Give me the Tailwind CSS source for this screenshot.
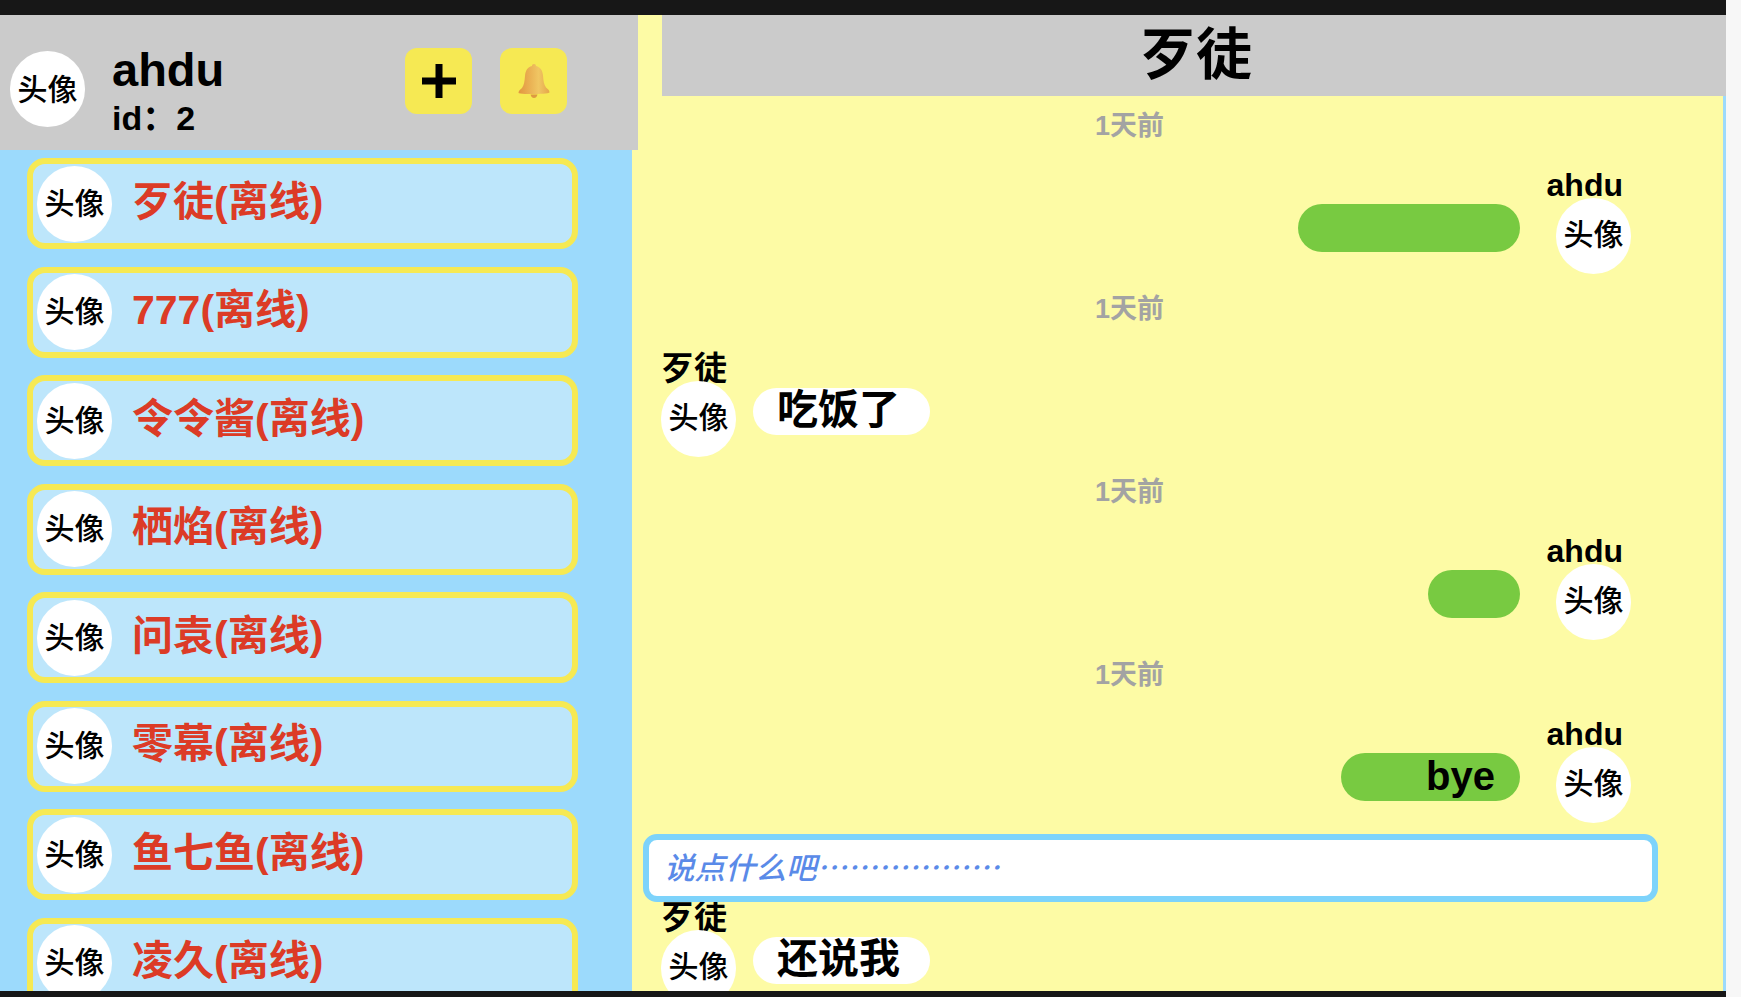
<!DOCTYPE html>
<html lang="zh-CN">
<head>
  <meta charset="UTF-8">
  <title>聊天</title>
  <script src="https://cdn.jsdelivr.net/npm/@tailwindcss/browser@4"></script>
</head>
<body class="bg-[#f7f7f7] h-[997px] overflow-hidden font-['Liberation_Sans','Noto_Sans_CJK_SC',sans-serif]">

  <div class="w-[1726px] h-[997px] flex flex-col bg-[#171717]">
    <div class="h-[15px] shrink-0"></div>

    <div class="h-[976px] flex bg-[#fdfba5] overflow-hidden relative">

      <!-- left column -->
      <div class="w-[638px] shrink-0 flex flex-col">
        <div class="h-[135px] shrink-0 bg-[#cbcbcb] flex items-center relative pl-[10px]">
          <div class="w-[75px] h-[76px] rounded-full bg-white flex items-center justify-center text-[30px] font-medium text-black mt-[13px]">头像</div>
          <div class="ml-[27px] mt-[14px] text-black">
            <div class="text-[47px] leading-[56px] font-bold">ahdu</div>
            <div class="text-[34px] leading-[40px] font-bold">id：2</div>
          </div>
          <div class="ml-auto flex gap-[28px] mr-[71px] mb-[3px]">
            <div class="w-[67px] h-[66px] rounded-[12px] bg-[#f6e953] flex items-center justify-center">
              <svg width="36" height="36" viewBox="0 0 36 36"><path d="M14.5 1h7v13.5H35v7H21.500V35h-7V21.500H1v-7h13.500z" fill="#000"/></svg>
            </div>
            <div class="w-[67px] h-[66px] rounded-[12px] bg-[#f6e953] flex items-center justify-center">
              <svg width="34" height="36" viewBox="0 0 34 36">
                <defs>
                  <linearGradient id="bell" x1="0" y1="0" x2="1" y2="0">
                    <stop offset="0" stop-color="#e2963f"/>
                    <stop offset="0.65" stop-color="#f0c663"/>
                    <stop offset="1" stop-color="#e5a64a"/>
                  </linearGradient>
                </defs>
                <path d="M17 1c1.300 0 2 .8 2 2 4.500 1 6.500 4.500 7 9.500.4 5 .8 9 3 12 2 1.500 3.500 3 3.500 5 0 1-12 1.500-15.500 1.500S1.500 31 1.500 30c0-2 1.500-3.500 3.500-5 2.200-3 2.600-7 3-12C8.500 7.500 10.500 4 15 3c0-1.200.7-2 2-2z" fill="url(#bell)"/>
                <path d="M13.500 31.500h7c-.5 2.500-2 3.500-3.500 3.500s-3-1-3.500-3.500z" fill="#de9a42"/>
              </svg>
            </div>
          </div>
        </div>

        <div class="w-[632px] flex-1 bg-[#9cdafc] pt-[8px] pl-[27px] flex flex-col gap-[17.5px] overflow-hidden">
          <div class="w-[551px] h-[91px] shrink-0 rounded-[18px] border-[6px] border-[#f6e953] bg-[#bde6fb] flex items-center pl-[4px]">
            <div class="w-[75px] h-[76px] pb-[1px] shrink-0 rounded-full bg-white flex items-center justify-center text-[30px] font-medium text-black">头像</div>
            <div class="ml-[20px] -mt-[2px] text-[41px] font-bold text-[#dc3b26]">歹徒(离线)</div>
          </div>
          <div class="w-[551px] h-[91px] shrink-0 rounded-[18px] border-[6px] border-[#f6e953] bg-[#bde6fb] flex items-center pl-[4px]">
            <div class="w-[75px] h-[76px] pb-[1px] shrink-0 rounded-full bg-white flex items-center justify-center text-[30px] font-medium text-black">头像</div>
            <div class="ml-[20px] -mt-[2px] text-[41px] font-bold text-[#dc3b26]">777(离线)</div>
          </div>
          <div class="w-[551px] h-[91px] shrink-0 rounded-[18px] border-[6px] border-[#f6e953] bg-[#bde6fb] flex items-center pl-[4px]">
            <div class="w-[75px] h-[76px] pb-[1px] shrink-0 rounded-full bg-white flex items-center justify-center text-[30px] font-medium text-black">头像</div>
            <div class="ml-[20px] -mt-[2px] text-[41px] font-bold text-[#dc3b26]">令令酱(离线)</div>
          </div>
          <div class="w-[551px] h-[91px] shrink-0 rounded-[18px] border-[6px] border-[#f6e953] bg-[#bde6fb] flex items-center pl-[4px]">
            <div class="w-[75px] h-[76px] pb-[1px] shrink-0 rounded-full bg-white flex items-center justify-center text-[30px] font-medium text-black">头像</div>
            <div class="ml-[20px] -mt-[2px] text-[41px] font-bold text-[#dc3b26]">栖焰(离线)</div>
          </div>
          <div class="w-[551px] h-[91px] shrink-0 rounded-[18px] border-[6px] border-[#f6e953] bg-[#bde6fb] flex items-center pl-[4px]">
            <div class="w-[75px] h-[76px] pb-[1px] shrink-0 rounded-full bg-white flex items-center justify-center text-[30px] font-medium text-black">头像</div>
            <div class="ml-[20px] -mt-[2px] text-[41px] font-bold text-[#dc3b26]">问袁(离线)</div>
          </div>
          <div class="w-[551px] h-[91px] shrink-0 rounded-[18px] border-[6px] border-[#f6e953] bg-[#bde6fb] flex items-center pl-[4px]">
            <div class="w-[75px] h-[76px] pb-[1px] shrink-0 rounded-full bg-white flex items-center justify-center text-[30px] font-medium text-black">头像</div>
            <div class="ml-[20px] -mt-[2px] text-[41px] font-bold text-[#dc3b26]">零幕(离线)</div>
          </div>
          <div class="w-[551px] h-[91px] shrink-0 rounded-[18px] border-[6px] border-[#f6e953] bg-[#bde6fb] flex items-center pl-[4px]">
            <div class="w-[75px] h-[76px] pb-[1px] shrink-0 rounded-full bg-white flex items-center justify-center text-[30px] font-medium text-black">头像</div>
            <div class="ml-[20px] -mt-[2px] text-[41px] font-bold text-[#dc3b26]">鱼七鱼(离线)</div>
          </div>
          <div class="w-[551px] h-[91px] shrink-0 rounded-[18px] border-[6px] border-[#f6e953] bg-[#bde6fb] flex items-center pl-[4px]">
            <div class="w-[75px] h-[76px] pb-[1px] shrink-0 rounded-full bg-white flex items-center justify-center text-[30px] font-medium text-black">头像</div>
            <div class="ml-[20px] -mt-[2px] text-[41px] font-bold text-[#dc3b26]">凌久(离线)</div>
          </div>
        </div>
      </div>

      <!-- chat -->
      <div class="flex-1 flex flex-col ml-[24px] relative">
        <div class="h-[81px] shrink-0 bg-[#cbcbcb] flex items-center justify-center text-[56px] font-bold text-black pb-[2px] pl-[4px]">歹徒</div>
      </div>

      <!-- messages -->
      <div class="absolute left-[632px] top-[81px] right-0 bottom-0 overflow-hidden border-r-[3px] border-[#9cdafc] pt-[9px]">

        <div class="h-[183px]">
          <div class="w-[995px] h-[40px] pt-[2px] flex items-center justify-center text-[27px] font-bold text-[#a3a3a3]">1天前</div>
          <div class="h-[37px] mt-[22px] text-[32px] leading-[37px] font-bold text-right pr-[100px] text-black">ahdu</div>
          <div class="flex justify-end items-start -mt-[6px] pr-[92px]">
            <div class="w-[222px] h-[48px] mt-[6px] rounded-full bg-[#78ca41]"></div>
            <div class="w-[75px] h-[76px] pb-[3px] ml-[36px] rounded-full bg-white flex items-center justify-center text-[30px] font-medium text-black">头像</div>
          </div>
        </div>

        <div class="h-[183px]">
          <div class="w-[995px] h-[40px] pt-[2px] flex items-center justify-center text-[27px] font-bold text-[#a3a3a3]">1天前</div>
          <div class="h-[37px] mt-[22px] text-[33px] leading-[37px] font-bold pl-[29px] text-black">歹徒</div>
          <div class="flex items-start -mt-[6px] pl-[29px]">
            <div class="w-[75px] h-[76px] pb-[3px] rounded-full bg-white flex items-center justify-center text-[30px] font-medium text-black">头像</div>
            <div class="w-[177px] h-[47px] mt-[7px] ml-[17px] pl-[24px] pb-[2px] rounded-full bg-white flex items-center text-[41px] font-bold text-black">吃饭了</div>
          </div>
        </div>

        <div class="h-[183px]">
          <div class="w-[995px] h-[40px] pt-[2px] flex items-center justify-center text-[27px] font-bold text-[#a3a3a3]">1天前</div>
          <div class="h-[37px] mt-[22px] text-[32px] leading-[37px] font-bold text-right pr-[100px] text-black">ahdu</div>
          <div class="flex justify-end items-start -mt-[6px] pr-[92px]">
            <div class="w-[92px] h-[48px] mt-[6px] rounded-full bg-[#78ca41]"></div>
            <div class="w-[75px] h-[76px] pb-[3px] ml-[36px] rounded-full bg-white flex items-center justify-center text-[30px] font-medium text-black">头像</div>
          </div>
        </div>

        <div class="h-[183px]">
          <div class="w-[995px] h-[40px] pt-[2px] flex items-center justify-center text-[27px] font-bold text-[#a3a3a3]">1天前</div>
          <div class="h-[37px] mt-[22px] text-[32px] leading-[37px] font-bold text-right pr-[100px] text-black">ahdu</div>
          <div class="flex justify-end items-start -mt-[6px] pr-[92px]">
            <div class="w-[179px] h-[48px] mt-[6px] pr-[25px] pb-[2px] rounded-full bg-[#78ca41] flex items-center justify-end text-[40px] font-bold text-black">bye</div>
            <div class="w-[75px] h-[76px] pb-[3px] ml-[36px] rounded-full bg-white flex items-center justify-center text-[30px] font-medium text-black">头像</div>
          </div>
        </div>

        <div class="h-[183px]">
          <div class="w-[995px] h-[40px] pt-[2px] flex items-center justify-center text-[27px] font-bold text-[#a3a3a3]">1天前</div>
          <div class="h-[37px] mt-[22px] text-[33px] leading-[37px] font-bold pl-[29px] text-black">歹徒</div>
          <div class="flex items-start -mt-[6px] pl-[29px]">
            <div class="w-[75px] h-[76px] pb-[3px] rounded-full bg-white flex items-center justify-center text-[30px] font-medium text-black">头像</div>
            <div class="w-[177px] h-[47px] mt-[7px] ml-[17px] pl-[24px] pb-[2px] rounded-full bg-white flex items-center text-[41px] font-bold text-black">还说我</div>
          </div>
        </div>
      </div>

      <!-- message box floats over the list -->
      <input type="text" placeholder="说点什么吧………………" class="absolute left-[643px] top-[819px] w-[1015px] h-[68px] rounded-[14px] border-[6px] border-[#7dd3fb] bg-white pl-[15px] pb-[4px] text-[30.5px] font-medium italic font-['Noto_Sans_CJK_SC',sans-serif] placeholder:text-[#5a8ae8] outline-none">
    </div>

    <div class="h-[6px] shrink-0"></div>
  </div>

</body>
</html>
